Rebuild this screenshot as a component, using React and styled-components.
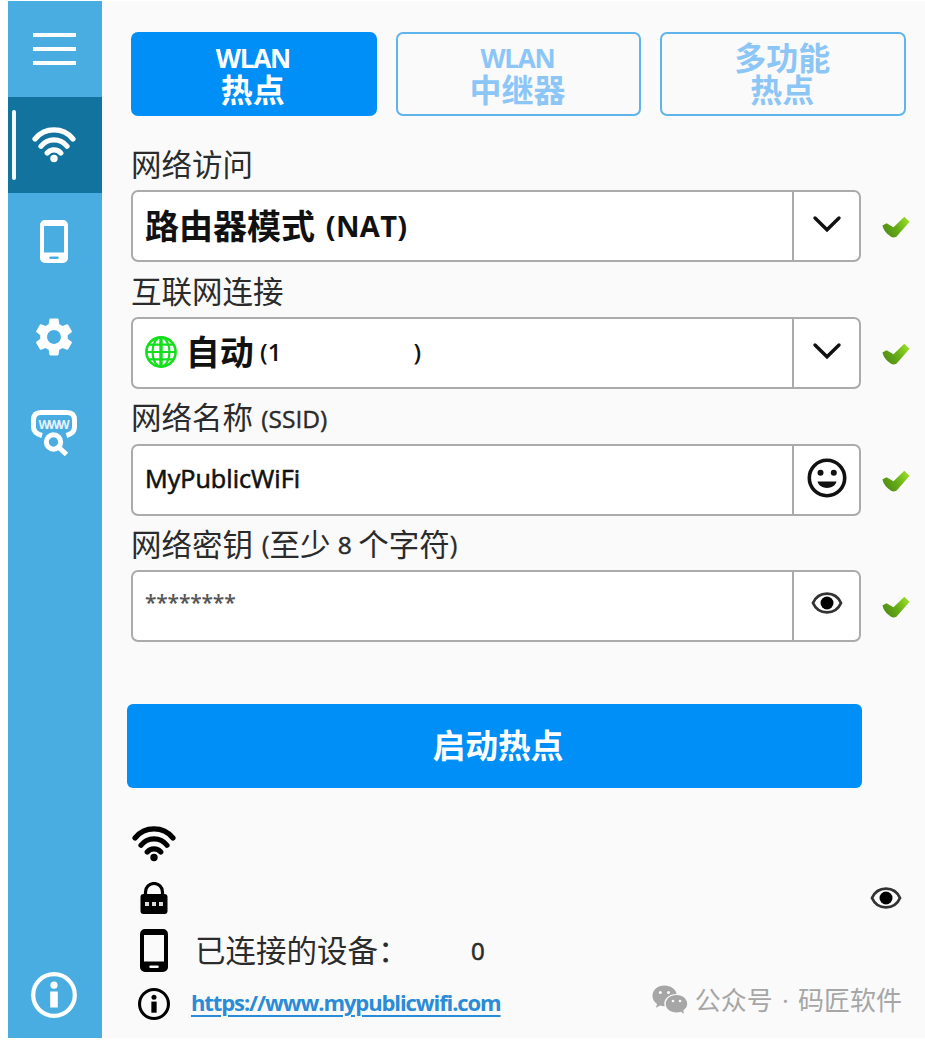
import React from 'react'
import styled, { createGlobalStyle } from 'styled-components'
import { MdSettings } from 'react-icons/md'

const GlobalStyle = createGlobalStyle`
  body {
    margin: 0;
    background: #fff;
    font-family: "Open Sans", "Noto Sans CJK SC", sans-serif;
  }
  svg {
    display: block;
    flex-shrink: 0;
  }
`

const Window = styled.div`
  display: flex;
  box-sizing: border-box;
  width: 917px;
  height: 1037px;
  margin: 1px 0 0 8px;
  background: #fafafa;
  overflow: hidden;
`

const Sidebar = styled.nav`
  width: 94px;
  flex-shrink: 0;
  display: flex;
  flex-direction: column;
  background: #4aade2;
`

const NavItem = styled.a`
  box-sizing: border-box;
  height: 96px;
  padding-right: 2px;
  display: flex;
  align-items: center;
  justify-content: center;
  color: #fff;
  &:last-child {
    height: 86px;
    margin-top: auto;
  }
`

const ActiveItem = styled(NavItem)`
  justify-content: flex-start;
  background: #12749e;
  &::before {
    content: '';
    width: 4px;
    height: 70px;
    border-radius: 2px;
    background: #f4fbff;
    margin: 0 16px 0 4px;
  }
`

const Burger = styled.span`
  width: 43px;
  height: 24px;
  border-top: 4px solid #fff;
  border-bottom: 4px solid #fff;
  display: flex;
  align-items: center;
  &::before {
    content: '';
    flex: 1;
    height: 4px;
    background: #fff;
  }
`

const Main = styled.main`
  flex: 1;
  padding: 31px 0 0 29px;
`

const Tabs = styled.div`
  width: 775px;
  display: grid;
  grid-template-columns: repeat(3, 1fr);
  gap: 19px;
  margin-bottom: 19.5px;
`

const Tab = styled.button`
  box-sizing: border-box;
  height: 84px;
  padding: 0 2px 0 0;
  border: 2px solid ${({ $active }) => $active ? '#008ff6' : '#5fb4ec'};
  border-radius: 7px;
  background: ${({ $active }) => $active ? '#008ff6' : 'transparent'};
  color: ${({ $active }) => $active ? '#fff' : '#8cc6f7'};
  font: 700 32px/32px "Open Sans", "Noto Sans CJK SC", sans-serif;
  display: flex;
  flex-direction: column;
  align-items: center;
  justify-content: center;
`

const Latin = styled.span`
  margin-left: ${({ $left }) => $left || 0}px;
  padding-top: ${({ $drop }) => $drop || 0}px;
  font-size: ${({ $size }) => $size}px;
  font-weight: ${({ $weight }) => $weight || 'inherit'};
  letter-spacing: ${({ $spacing }) => $spacing || 0}px;
  -webkit-text-stroke: ${({ $stroke }) => $stroke || 0}px currentColor;
`

const Label = styled.label`
  box-sizing: border-box;
  height: 54.7px;
  padding-top: 2px;
  display: flex;
  align-items: center;
  white-space: pre;
  font-size: 30.5px;
  line-height: 40px;
  color: #2b2b2b;
`

const FieldRow = styled.div`
  display: flex;
  align-items: center;
  gap: 21px;
  > svg {
    margin-top: 2px;
  }
`

const Box = styled.div`
  box-sizing: border-box;
  width: 730px;
  height: 72px;
  display: flex;
  border: 2px solid #ababab;
  border-radius: 7px;
  background: #fff;
`

const Value = styled.div`
  flex: 1;
  display: flex;
  align-items: center;
  white-space: pre;
  padding: 0 0 ${({ $lift }) => $lift || 0}px 12px;
  font-size: 34px;
  font-weight: 700;
  line-height: 40px;
  color: #111;
`

// the rest of the address is masked out
const Masked = styled.span`
  width: 132px;
`

const Stars = styled.span`
  font-size: 21px;
  font-weight: 600;
  letter-spacing: -0.2px;
  color: #555;
`

const BoxButton = styled.button`
  box-sizing: border-box;
  width: 67px;
  padding: 0 0 ${({ $lift }) => $lift || 0}px;
  border: 0;
  border-left: 2px solid #ababab;
  background: none;
  color: #111;
  display: flex;
  align-items: center;
  justify-content: center;
`

const Start = styled.button`
  width: 735px;
  height: 84px;
  margin: 62px 0 0 -4px;
  border: 0;
  border-radius: 6px;
  background: #008ff6;
  color: #fff;
  padding: 0 0 4px 7px;
  font: 700 32.8px/40px "Noto Sans CJK SC", sans-serif;
`

const Status = styled.div`
  width: 771px;
  margin-top: 29.5px;
`

const StatusRow = styled.div`
  height: 53.3px;
  display: flex;
  align-items: center;
  font-size: 30.5px;
  line-height: 40px;
  color: #2b2b2b;
`

const StatusIcon = styled.span`
  width: 46px;
  display: flex;
  justify-content: center;
  color: #000;
`

const Devices = styled.span`
  width: 276px;
  margin-left: 18px;
  padding-bottom: 2px;
`

const SiteLink = styled.a`
  margin-left: 14px;
  padding-bottom: 4px;
  font-size: 22px;
  font-weight: 700;
  letter-spacing: -1.1px;
  color: #2a8bd6;
  text-decoration: underline;
  text-decoration-thickness: 2px;
  text-underline-offset: 4px;
`

const Right = styled.span`
  margin-left: auto;
`

const Account = styled.span`
  margin-left: auto;
  display: flex;
  align-items: center;
  gap: 7px;
  padding-bottom: 9px;
  font: 400 26px/30px "Open Sans", "Noto Sans CJK SC", sans-serif;
  word-spacing: 2.5px;
  white-space: pre;
  color: #a6a6a6;
`

const WifiIcon = () => (
  <svg width='44' height='36' viewBox='0 0 44 36' fill='none' stroke='currentColor' strokeWidth='5.2' strokeLinecap='round'>
    <path d='M3 12A24.5 24.5 0 0 1 41 12M9 19.3A16.3 16.3 0 0 1 35 19.3M15.2 26A9 9 0 0 1 28.8 26' />
    <circle cx='22' cy='31.5' r='3.7' fill='currentColor' stroke='none' />
  </svg>
)

const PhoneIcon = () => (
  <svg width='28' height='43' viewBox='0 0 28 43' fill='currentColor' fillRule='evenodd'>
    <path d='M5 0H23A5 5 0 0 1 28 5V38A5 5 0 0 1 23 43H5A5 5 0 0 1 0 38V5A5 5 0 0 1 5 0ZM4 6V32.5H24V6ZM10.5 36.5A1.2 1.2 0 0 0 10.5 39H17.5A1.2 1.2 0 0 0 17.5 36.5Z' />
  </svg>
)

const WebSearchIcon = () => (
  <svg width='46' height='46' viewBox='0 0 46 46' fill='none' stroke='currentColor'>
    <path d='M11 25.5C5.5 24 2.5 21 2.5 17V10Q2.5 2.5 10 2.5H36Q43.5 2.5 43.5 10V17C43.5 21 40.5 24 35.5 25.5' strokeWidth='5' />
    <text x='23' y='18.5' textAnchor='middle' textLength='31' fontSize='12' fontWeight='700' fill='currentColor' stroke='none' opacity='0.85'>WWW</text>
    <circle cx='22.5' cy='32' r='7.2' strokeWidth='5' />
    <path d='M28 37.5L35.5 44.5' strokeWidth='5' />
  </svg>
)

const InfoIcon = ({ size, ring }) => (
  <svg width={size} height={size} viewBox='0 0 46 46' fill='currentColor'>
    <circle cx='23' cy='23' r='20.8' fill='none' stroke='currentColor' strokeWidth={ring} />
    <circle cx='23' cy='13.2' r='3.6' />
    <path d='M19.2 19.5H26.8V35.5H19.2Z' />
  </svg>
)

const LockIcon = () => (
  <svg width='28' height='32' viewBox='0 0 28 32'>
    <path d='M5.5 13V10A8.5 8.5 0 0 1 22.5 10V13' fill='none' stroke='currentColor' strokeWidth='3.2' />
    <rect x='0.5' y='12' width='27' height='20' rx='3' fill='currentColor' />
    <path d='M5 20H9V24H5ZM12 20H16V24H12ZM19 20H23V24H19Z' fill='#ddd' />
  </svg>
)

const EyeIcon = () => (
  <svg width='32' height='24' viewBox='0 0 32 24'>
    <path d='M2 12C7.5 -0.5 24.5 -0.5 30 12C24.5 24.5 7.5 24.5 2 12Z' fill='#fff' stroke='#333' strokeWidth='2.8' />
    <circle cx='16' cy='12' r='6.5' fill='#000' />
  </svg>
)

const ChevronIcon = () => (
  <svg width='30' height='18' viewBox='0 0 30 18' fill='none' stroke='currentColor' strokeWidth='3.4' strokeLinecap='round'>
    <path d='M3 3L15 14.8L27 3' />
  </svg>
)

const SmileIcon = () => (
  <svg width='40' height='40' viewBox='0 0 40 40' fill='currentColor'>
    <circle cx='20' cy='20' r='17.7' fill='none' stroke='currentColor' strokeWidth='3.6' />
    <circle cx='13.5' cy='14.8' r='3' />
    <circle cx='26.8' cy='14.8' r='3' />
    <path d='M10.5 23.5H29.5C27.5 32 12.5 32 10.5 23.5Z' />
  </svg>
)

const GlobeIcon = () => (
  <svg width='32' height='32' viewBox='0 0 32 32' fill='none' stroke='#14df1c' strokeWidth='2.2'>
    <circle cx='16' cy='16' r='14.6' strokeWidth='2.6' />
    <ellipse cx='16' cy='16' rx='8.5' ry='14.6' />
    <path d='M16 1V31' strokeWidth='3.4' />
    <path d='M1 16H31M4 8.7H28M4 23.3H28' />
  </svg>
)

const CheckIcon = () => (
  <svg width='29' height='22' viewBox='0 0 29 22'>
    <defs>
      <linearGradient id='check' x1='0' y1='0.7' x2='1' y2='0.2'>
        <stop offset='0' stopColor='#4f8a16' />
        <stop offset='0.5' stopColor='#66ad16' />
        <stop offset='1' stopColor='#9be02a' />
      </linearGradient>
    </defs>
    <path d='M0.4 9.4L4.6 7.2L11.5 11.2L22.3 0.7L27.6 5.8L14.4 20.8Q11.5 22.2 9 20.8Q2 16 0.4 9.4Z' fill='url(#check)' />
  </svg>
)

const WechatIcon = () => (
  <svg width='36' height='29' viewBox='0 0 36 29' fill='currentColor'>
    <path d='M12.5 0.5C5.5 0.5 0.5 5 0.5 11C0.5 14.3 2.2 17 5 19L4 22.8L8.2 20.6C9.5 21 11 21.3 12.7 21.2C10.7 14.5 16.5 8.8 24.7 9C23.5 4 18.6 0.5 12.5 0.5Z' />
    <path d='M24.5 10C18.3 10 13.7 14 13.7 18.8C13.7 23.7 18.3 27.5 24.5 27.5C26 27.5 27.4 27.3 28.7 26.8L32 28.7L31.2 25.5C33.7 23.8 35.2 21.4 35.2 18.8C35.2 14 30.7 10 24.5 10Z' />
    <g fill='#fafafa'>
      <circle cx='8.3' cy='7.5' r='1.5' />
      <circle cx='16.5' cy='7.5' r='1.5' />
      <circle cx='21' cy='16' r='1.3' />
      <circle cx='28' cy='16' r='1.3' />
    </g>
  </svg>
)

const Field = ({ label, icon, lift, buttonLift, children }) => (
  <div>
    <Label>{label}</Label>
    <FieldRow>
      <Box>
        <Value $lift={lift}>{children}</Value>
        <BoxButton $lift={buttonLift}>{icon}</BoxButton>
      </Box>
      <CheckIcon />
    </FieldRow>
  </div>
)

export default () => (
  <Window>
    <GlobalStyle />
    <Sidebar>
      <NavItem>
        <Burger />
      </NavItem>
      <ActiveItem>
        <WifiIcon />
      </ActiveItem>
      <NavItem>
        <PhoneIcon />
      </NavItem>
      <NavItem>
        <MdSettings size={46} />
      </NavItem>
      <NavItem>
        <WebSearchIcon />
      </NavItem>
      <NavItem>
        <InfoIcon size={46} ring={4.2} />
      </NavItem>
    </Sidebar>
    <Main>
      <Tabs>
        <Tab $active>
          <Latin $size={26} $spacing={-1.2}>WLAN</Latin>
          <span>热点</span>
        </Tab>
        <Tab>
          <Latin $size={26} $spacing={-1.2}>WLAN</Latin>
          <span>中继器</span>
        </Tab>
        <Tab>
          <span>多功能</span>
          <span>热点</span>
        </Tab>
      </Tabs>
      <Field label='网络访问' icon={<ChevronIcon />} buttonLift={4}>
        路由器模式<Latin $size={29} $left={3} $spacing={0.3}> (NAT)</Latin>
      </Field>
      <Field label='互联网连接' icon={<ChevronIcon />} lift={1} buttonLift={4}>
        <GlobeIcon />
        <span> 自动</span>
        <Latin $size={24} $weight={600}> (1</Latin>
        <Masked />
        <Latin $size={24} $weight={600}>)</Latin>
      </Field>
      <Field
        label={<>网络名称<Latin $size={24.5} $left={2} $drop={4} $stroke={0.4}> (SSID)</Latin></>}
        icon={<SmileIcon />}
        lift={4}
        buttonLift={4}
      >
        <Latin $size={25.2} $weight={400} $stroke={0.6}>MyPublicWiFi</Latin>
      </Field>
      <Field
        label={<>网络密钥<Latin $size={26} $left={2} $stroke={0.3}> (</Latin>至少<Latin $size={24.5} $left={1} $drop={3} $stroke={0.5}> 8 </Latin>个字符<Latin $size={26} $stroke={0.3}>)</Latin></>}
        icon={<EyeIcon />}
        lift={9}
        buttonLift={6}
      >
        <Stars>********</Stars>
      </Field>
      <Start>启动热点</Start>
      <Status>
        <StatusRow>
          <StatusIcon><WifiIcon /></StatusIcon>
        </StatusRow>
        <StatusRow>
          <StatusIcon><LockIcon /></StatusIcon>
          <Right><EyeIcon /></Right>
        </StatusRow>
        <StatusRow>
          <StatusIcon><PhoneIcon /></StatusIcon>
          <Devices>已连接的设备：</Devices>
          <Latin $size={24} $weight={400} $stroke={0.6}>0</Latin>
        </StatusRow>
        <StatusRow>
          <StatusIcon><InfoIcon size={32} ring={4.4} /></StatusIcon>
          <SiteLink>https://www.mypublicwifi.com</SiteLink>
          <Account>
            <WechatIcon />
            公众号 · 码匠软件
          </Account>
        </StatusRow>
      </Status>
    </Main>
  </Window>
)
